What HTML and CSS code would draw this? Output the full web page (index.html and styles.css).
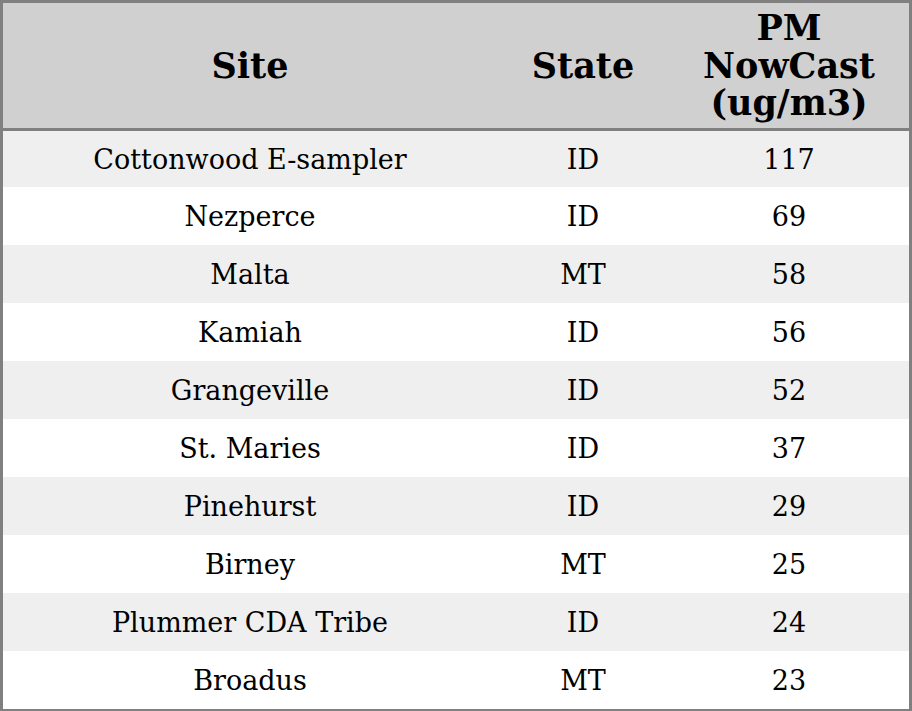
FILE: index.html
```html
<!DOCTYPE html>
<html>
<head>
<meta charset="utf-8">
<link rel="stylesheet" href="styles.css">
</head>
<body>
<table class="pm-table">
  <thead>
    <tr>
      <th class="col-site">Site</th>
      <th class="col-state">State</th>
      <th class="col-pm">PM<br>NowCast<br>(ug/m3)</th>
    </tr>
  </thead>
  <tbody>
    <tr><td>Cottonwood E-sampler</td><td>ID</td><td>117</td></tr>
    <tr><td>Nezperce</td><td>ID</td><td>69</td></tr>
    <tr><td>Malta</td><td>MT</td><td>58</td></tr>
    <tr><td>Kamiah</td><td>ID</td><td>56</td></tr>
    <tr><td>Grangeville</td><td>ID</td><td>52</td></tr>
    <tr><td>St. Maries</td><td>ID</td><td>37</td></tr>
    <tr><td>Pinehurst</td><td>ID</td><td>29</td></tr>
    <tr><td>Birney</td><td>MT</td><td>25</td></tr>
    <tr><td>Plummer CDA Tribe</td><td>ID</td><td>24</td></tr>
    <tr><td>Broadus</td><td>MT</td><td>23</td></tr>
  </tbody>
</table>
</body>
</html>
```
FILE: styles.css
```css
html, body {
  margin: 0;
  padding: 0;
  background: #ffffff;
}

.pm-table {
  width: 912px;
  border-collapse: separate;
  border-spacing: 0;
  border: 3px solid #808080;
  font-family: "DejaVu Serif", serif;
  color: #000000;
  table-layout: fixed;
}

.pm-table th {
  background: #d0d0d0;
  font-size: 35px;
  font-weight: bold;
  line-height: 37.5px;
  height: 125px;
  padding: 0;
  text-align: center;
  vertical-align: middle;
  border-bottom: 3px solid #808080;
}

.col-site { width: 494px; }
.col-state { width: 172px; }
.col-pm { width: 240px; }

.pm-table td {
  font-size: 27px;
  height: 58px;
  padding: 0;
  text-align: center;
  vertical-align: middle;
}

.pm-table tbody tr:first-child td {
  height: 56px;
}

.pm-table tbody tr:nth-child(odd) td {
  background: #efefef;
}

.pm-table tbody tr:nth-child(even) td {
  background: #ffffff;
}
```
